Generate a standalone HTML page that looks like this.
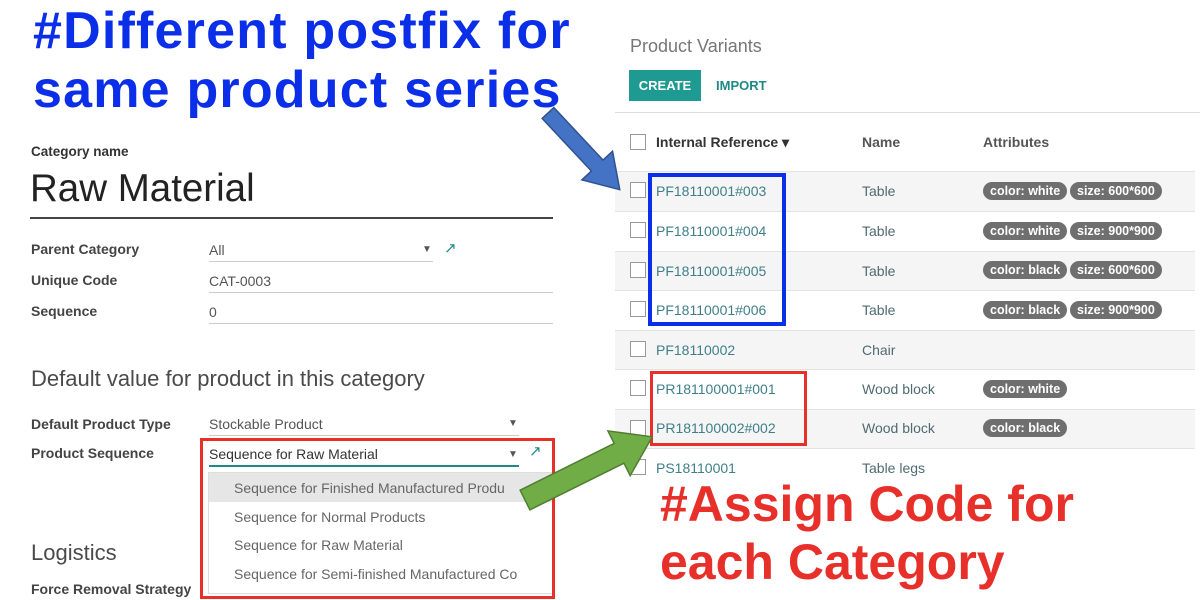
<!DOCTYPE html>
<html><head><meta charset="utf-8"><style>
*{margin:0;padding:0;box-sizing:border-box}
body{width:1200px;height:600px;background:#fff;position:relative;overflow:hidden;font-family:"Liberation Sans",sans-serif;color:#4c4c4c}
.a{position:absolute;white-space:nowrap}
.h1{font-weight:bold;font-size:52px;color:#0b2ee8;letter-spacing:1.2px}
.h2{font-weight:bold;font-size:50px;color:#e8302b}
.lbl{font-size:14px;font-weight:bold;color:#444}
.val{font-size:14px;color:#555}
.ul{position:absolute;height:1px;background:#ccc}
.teal{color:#1f8a85}
.row{position:absolute;left:615px;width:580px;height:40px;border-top:1px solid #e3e3e3}
.cb{position:absolute;left:630px;width:16px;height:16px;border:1.5px solid #999;background:#fff}
.ref{font-size:14px;color:#3f7f8a;left:656px}
.nm{font-size:14px;color:#4f6b70;left:862px}
.tag{position:absolute;background:#6f6f6f;color:#fff;font-size:12.5px;border-radius:9px;height:18px;line-height:18px;padding:0 7px;font-weight:bold}
</style></head><body>

<div class="a h1" style="left:33px;top:1px">#Different postfix for</div>
<div class="a h1" style="left:33px;top:60px">same product series</div>

<div class="a lbl" style="left:31px;top:144px;font-size:13.5px;color:#333">Category name</div>
<div class="a" style="left:30px;top:167px;font-size:38.5px;color:#222">Raw Material</div>
<div class="ul" style="left:30px;top:217px;width:523px;height:2px;background:#444"></div>

<div class="a lbl" style="left:31px;top:241px">Parent Category</div>
<div class="a val" style="left:209px;top:242px">All</div>
<div class="ul" style="left:209px;top:261px;width:224px"></div>
<div class="a" style="left:422px;top:244px;font-size:10px;color:#555">▼</div>
<div class="a teal" style="left:444px;top:239px;font-size:15px">↗</div>
<div class="a lbl" style="left:31px;top:272px">Unique Code</div>
<div class="a val" style="left:209px;top:273px">CAT-0003</div>
<div class="ul" style="left:209px;top:292px;width:344px"></div>
<div class="a lbl" style="left:31px;top:303px">Sequence</div>
<div class="a val" style="left:209px;top:304px">0</div>
<div class="ul" style="left:209px;top:323px;width:344px"></div>

<div class="a" style="left:31px;top:366px;font-size:22px;color:#4a4a4a">Default value for product in this category</div>

<div class="a lbl" style="left:31px;top:416px">Default Product Type</div>
<div class="a val" style="left:209px;top:416px">Stockable Product</div>
<div class="ul" style="left:209px;top:435px;width:310px"></div>
<div class="a" style="left:508px;top:418px;font-size:10px;color:#555">▼</div>
<div class="a lbl" style="left:31px;top:445px">Product Sequence</div>
<div class="a" style="left:209px;top:446px;font-size:14px;color:#333">Sequence for Raw Material</div>
<div class="ul" style="left:209px;top:465px;width:310px;height:2px;background:#1f8a85"></div>
<div class="a" style="left:508px;top:449px;font-size:10px;color:#555">▼</div>
<div class="a teal" style="left:529px;top:442px;font-size:15px">↗</div>

<div class="a" style="left:208px;top:472px;width:345px;height:122px;border:1px solid #ddd;background:#fff"></div>
<div class="a" style="left:209px;top:473px;width:344px;height:29px;background:#e6e6e6"></div>
<div class="a val" style="left:234px;top:480px;color:#666">Sequence for Finished Manufactured Produ</div>
<div class="a val" style="left:234px;top:509px;color:#666">Sequence for Normal Products</div>
<div class="a val" style="left:234px;top:537px;color:#666">Sequence for Raw Material</div>
<div class="a val" style="left:234px;top:566px;color:#666">Sequence for Semi-finished Manufactured Co</div>
<div class="a" style="left:200px;top:438px;width:355px;height:161px;border:3px solid #e8302b"></div>

<div class="a" style="left:31px;top:540px;font-size:22px;color:#4a4a4a">Logistics</div>
<div class="a lbl" style="left:31px;top:581px">Force Removal Strategy</div>

<div class="a" style="left:630px;top:36px;font-size:18px;color:#777">Product Variants</div>
<div class="a" style="left:629px;top:70px;width:72px;height:31px;background:#1f9a92;color:#fff;font-size:13px;font-weight:bold;line-height:31px;text-align:center">CREATE</div>
<div class="a teal" style="left:716px;top:78px;font-size:13px;font-weight:bold">IMPORT</div>
<div class="ul" style="left:615px;top:112px;width:585px;background:#ddd"></div>

<div class="cb" style="top:134px"></div>
<div class="a" style="left:656px;top:134px;font-size:14px;font-weight:bold;color:#333">Internal Reference ▾</div>
<div class="a" style="left:862px;top:134px;font-size:14px;font-weight:bold;color:#555">Name</div>
<div class="a" style="left:983px;top:134px;font-size:14px;font-weight:bold;color:#555">Attributes</div>

<div class="row" style="top:171px;background:#f5f5f5"></div>
<div class="row" style="top:211px"></div>
<div class="row" style="top:251px;background:#f5f5f5"></div>
<div class="row" style="top:290px"></div>
<div class="row" style="top:330px;background:#f5f5f5"></div>
<div class="row" style="top:369px"></div>
<div class="row" style="top:409px;background:#f5f5f5"></div>
<div class="row" style="top:448px"></div>

<div class="cb" style="top:182px"></div><div class="a ref" style="top:183px">PF18110001#003</div><div class="a nm" style="top:183px">Table</div>
<div class="tag" style="left:983px;top:182px">color: white</div><div class="tag" style="left:1070px;top:182px">size: 600*600</div>
<div class="cb" style="top:222px"></div><div class="a ref" style="top:223px">PF18110001#004</div><div class="a nm" style="top:223px">Table</div>
<div class="tag" style="left:983px;top:222px">color: white</div><div class="tag" style="left:1070px;top:222px">size: 900*900</div>
<div class="cb" style="top:262px"></div><div class="a ref" style="top:263px">PF18110001#005</div><div class="a nm" style="top:263px">Table</div>
<div class="tag" style="left:983px;top:261px">color: black</div><div class="tag" style="left:1070px;top:261px">size: 600*600</div>
<div class="cb" style="top:301px"></div><div class="a ref" style="top:302px">PF18110001#006</div><div class="a nm" style="top:302px">Table</div>
<div class="tag" style="left:983px;top:301px">color: black</div><div class="tag" style="left:1070px;top:301px">size: 900*900</div>
<div class="cb" style="top:341px"></div><div class="a ref" style="top:342px">PF18110002</div><div class="a nm" style="top:342px">Chair</div>
<div class="cb" style="top:380px"></div><div class="a ref" style="top:381px">PR181100001#001</div><div class="a nm" style="top:381px">Wood block</div>
<div class="tag" style="left:983px;top:380px">color: white</div>
<div class="cb" style="top:420px"></div><div class="a ref" style="top:420px">PR181100002#002</div><div class="a nm" style="top:420px">Wood block</div>
<div class="tag" style="left:983px;top:419px">color: black</div>
<div class="cb" style="top:459px"></div><div class="a ref" style="top:460px">PS18110001</div><div class="a nm" style="top:460px">Table legs</div>

<div class="a" style="left:648px;top:173px;width:138px;height:153px;border:4px solid #0b2ee8"></div>
<div class="a" style="left:650px;top:371px;width:157px;height:75px;border:3px solid #e8302b"></div>

<div class="a h2" style="left:660px;top:475px">#Assign Code for</div>
<div class="a h2" style="left:660px;top:533px">each Category</div>

<svg class="a" style="left:0;top:0" width="1200" height="600">
<g transform="translate(548,113) rotate(46.9)">
<polygon points="0,-8 72,-8 72,-21 105,0 72,21 72,8 0,8" fill="#4472c4" stroke="#2f528f" stroke-width="1.5"/>
</g>
<g transform="translate(525,500) rotate(-26.4)">
<polygon points="0,-11 105,-11 105,-25 142,0 105,25 105,11 0,11" fill="#70ad47" stroke="#507e32" stroke-width="1.5"/>
</g>
</svg>
</body></html>
